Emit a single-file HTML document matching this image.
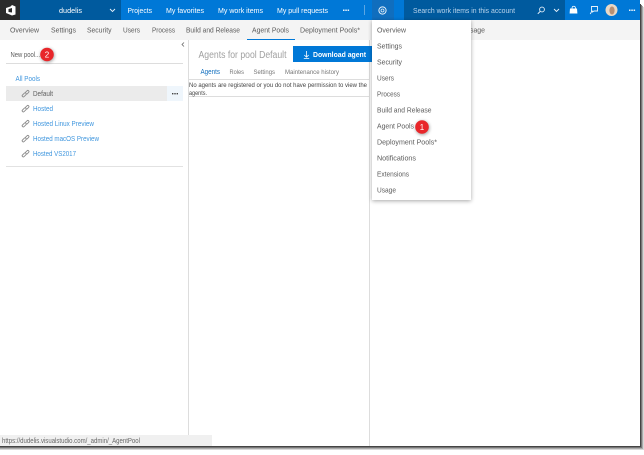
<!DOCTYPE html>
<html><head><meta charset="utf-8"><style>
html,body{margin:0;padding:0;background:#fff;width:644px;height:450px;overflow:hidden}
svg{display:block;position:absolute;left:-5px;top:-5px;filter:blur(.38px)}
text{font-family:"Liberation Sans",sans-serif;font-size:7.500px;fill:#5c5c5c;white-space:pre}
.w text{fill:#fff}
.b text{fill:#3f96de}
.g{fill:none;stroke:#8c8c8c;stroke-width:.9}
</style></head><body>
<svg width="654" height="460" viewBox="-5 -5 654 460" xmlns="http://www.w3.org/2000/svg">
<defs>
<filter id="s" x="-20%" y="-20%" width="140%" height="140%"><feGaussianBlur stdDeviation="2"/></filter>
<filter id="r" x="-50%" y="-50%" width="200%" height="200%"><feGaussianBlur stdDeviation="1.500"/></filter>
<g id="l"><path class="g" d="M-3 1.500l1.800-1.800a1.100 1.100 0 0 1 1.600 1.600l-1.800 1.800a1.100 1.100 0 0 1-1.600-1.600zM-.4 -.8l1.900-1.900a1.100 1.100 0 0 1 1.600 1.600l-1.900 1.900"/></g>
</defs>
<rect x="-5" y="-5" width="654" height="460" fill="#fff"/>
<!-- top bar -->
<rect y="-5" width="640" height="25" fill="#0078d7"/>
<rect x="-5" y="-5" width="25" height="25" fill="#2b2b2b"/>
<rect x="20" y="-5" width="101" height="25" fill="#005a9e"/>
<rect x="404" y="-5" width="161" height="25" fill="#005a9e"/>
<rect x="372" y="-5" width="22" height="25" fill="#106ebe"/>
<path d="M6 8l4.500-1.500L12 5l3.500 1.500v8L12 15.500l-6-2.500z" fill="#fff"/>
<path d="M8.500 9l3.500-1v4.500l-3.500-.5z" fill="#2b2b2b"/>
<g class="w">
<text x="59" y="13" textLength="23" lengthAdjust="spacingAndGlyphs">dudelis</text>
<text x="127.500" y="13" textLength="24.500" lengthAdjust="spacingAndGlyphs">Projects</text>
<text x="166" y="13" textLength="38" lengthAdjust="spacingAndGlyphs">My favorites</text>
<text x="218" y="13" textLength="45" lengthAdjust="spacingAndGlyphs">My work items</text>
<text x="277" y="13" textLength="51" lengthAdjust="spacingAndGlyphs">My pull requests</text>
<text x="413" y="13" textLength="102" lengthAdjust="spacingAndGlyphs" style="fill:#b9d4ec">Search work items in this account</text>
</g>
<path d="M110 9l2.500 2.500L115 9" fill="none" stroke="#e8f2fb" stroke-width=".9"/>
<g fill="#e8f2fb"><rect x="343" y="9.500" width="1.500" height="1.500"/><rect x="345.300" y="9.500" width="1.500" height="1.500"/><rect x="347.600" y="9.500" width="1.500" height="1.500"/>
<rect x="629" y="9.500" width="1.500" height="1.500"/><rect x="631.300" y="9.500" width="1.500" height="1.500"/><rect x="633.600" y="9.500" width="1.500" height="1.500"/></g>
<rect x="364" y="5" width="1" height="10" fill="#5ba6e3"/>
<circle cx="382.500" cy="10.500" r="3.600" fill="none" stroke="#e8f2fb" stroke-width="1"/><circle cx="382.500" cy="10.500" r="1.500" fill="none" stroke="#e8f2fb" stroke-width=".8"/>
<circle cx="542" cy="9.500" r="2.400" fill="none" stroke="#e8f2fb" stroke-width=".9"/><path d="M540.300 11.300L537.800 13.800" stroke="#e8f2fb" stroke-width="1"/>
<path d="M554 9l2.500 2.500L559 9" fill="none" stroke="#e8f2fb" stroke-width=".9"/>
<path d="M570 8.500h7l.4 5h-7.800z" fill="#fff"/><path d="M572 8.500c0-3 3.500-3 3.500 0" fill="none" stroke="#fff" stroke-width=".8"/>
<path d="M591.500 6.500h6v4.500h-3.500l-1.500 1-.2-1h-.8z" fill="none" stroke="#e8f2fb" stroke-width=".9"/><path d="M592 11l-1.800 3" stroke="#e8f2fb" stroke-width=".9"/>
<circle cx="611.500" cy="10" r="6" fill="#e9d8c6"/><ellipse cx="612" cy="10.500" rx="2.600" ry="4" fill="#b78f74"/>
<!-- sub nav -->
<rect x="-5" y="20" width="645" height="20" fill="#f4f4f4"/>
<text x="10" y="32.500" textLength="29" lengthAdjust="spacingAndGlyphs">Overview</text>
<text x="51" y="32.500" textLength="25" lengthAdjust="spacingAndGlyphs">Settings</text>
<text x="87" y="32.500" textLength="24.500" lengthAdjust="spacingAndGlyphs">Security</text>
<text x="123" y="32.500" textLength="17" lengthAdjust="spacingAndGlyphs">Users</text>
<text x="152" y="32.500" textLength="23" lengthAdjust="spacingAndGlyphs">Process</text>
<text x="186" y="32.500" textLength="54" lengthAdjust="spacingAndGlyphs">Build and Release</text>
<text x="252" y="32.500" textLength="37" lengthAdjust="spacingAndGlyphs">Agent Pools</text>
<text x="300" y="32.500" textLength="60" lengthAdjust="spacingAndGlyphs">Deployment Pools*</text>
<text x="465" y="32.500" textLength="20" lengthAdjust="spacingAndGlyphs">Usage</text>
<rect x="247" y="39" width="48" height="1" fill="#0078d7"/>
<!-- left panel -->
<text x="10.500" y="57" textLength="29.500" lengthAdjust="spacingAndGlyphs">New pool...</text>
<path d="M184 42.500l-2 2 2 2" fill="none" stroke="#666" stroke-width=".8"/>
<rect x="6" y="63" width="177" height="1" fill="#ddd"/>
<g class="b"><text x="15.500" y="81" textLength="24.500" lengthAdjust="spacingAndGlyphs">All Pools</text></g>
<rect x="6" y="86" width="161" height="15" fill="#ebebeb"/>
<rect x="167" y="86" width="16" height="15" fill="#eff6fc"/>
<g fill="#444"><rect x="172" y="93" width="1.400" height="1.400"/><rect x="174.300" y="93" width="1.400" height="1.400"/><rect x="176.600" y="93" width="1.400" height="1.400"/></g>
<use href="#l" x="25.500" y="93.500"/><use href="#l" x="25.500" y="108.500"/><use href="#l" x="25.500" y="123.500"/><use href="#l" x="25.500" y="138.500"/><use href="#l" x="25.500" y="153.500"/>
<text x="33" y="96" textLength="20" lengthAdjust="spacingAndGlyphs">Default</text>
<g class="b">
<text x="33" y="111" textLength="20" lengthAdjust="spacingAndGlyphs">Hosted</text>
<text x="33" y="126" textLength="61" lengthAdjust="spacingAndGlyphs">Hosted Linux Preview</text>
<text x="33" y="141" textLength="66" lengthAdjust="spacingAndGlyphs">Hosted macOS Preview</text>
<text x="33" y="156" textLength="43" lengthAdjust="spacingAndGlyphs">Hosted VS2017</text>
</g>
<rect x="6" y="166" width="177" height="1" fill="#e2e2e2"/>
<rect x="188" y="40" width="1" height="406" fill="#ddd"/>
<rect x="369" y="40" width="1" height="406" fill="#ddd"/>
<!-- center -->
<text x="198.500" y="58" textLength="88" lengthAdjust="spacingAndGlyphs" style="font-size:10px;fill:#a0a0a0">Agents for pool Default</text>
<rect x="293" y="46" width="79" height="16" fill="#0078d7"/>
<path d="M306.500 51v6M304.300 55l2.200 2.200 2.200-2.200M303.800 58.500h5.400" fill="none" stroke="#fff" stroke-width=".8"/>
<text x="313" y="57" textLength="53" lengthAdjust="spacingAndGlyphs" style="font-weight:bold;fill:#fff">Download agent</text>
<text x="200.500" y="74" textLength="19.500" lengthAdjust="spacingAndGlyphs" style="fill:#106ebe">Agents</text>
<text x="229.500" y="74" textLength="14.500" lengthAdjust="spacingAndGlyphs" style="font-size:6.500px;fill:#777">Roles</text>
<text x="253.500" y="74" textLength="21.500" lengthAdjust="spacingAndGlyphs" style="font-size:6.500px;fill:#777">Settings</text>
<text x="285" y="74" textLength="54" lengthAdjust="spacingAndGlyphs" style="font-size:6.500px;fill:#777">Maintenance history</text>
<rect x="189" y="79" width="180" height="1" fill="#ddd"/>
<rect x="189" y="96" width="180" height="1" fill="#ddd"/>
<text x="189" y="87" textLength="178" lengthAdjust="spacingAndGlyphs" style="fill:#444;font-size:6.800px">No agents are registered or you do not have permission to view the</text>
<text x="189" y="95" textLength="18" lengthAdjust="spacingAndGlyphs" style="fill:#444;font-size:6.800px">agents.</text>
<!-- menu -->
<rect x="372" y="21" width="99" height="180" fill="#000" opacity=".35" filter="url(#s)"/>
<rect x="372" y="20" width="99" height="180" fill="#fff"/>
<g>
<text x="377" y="32.500" textLength="29" lengthAdjust="spacingAndGlyphs">Overview</text>
<text x="377" y="48.500" textLength="25" lengthAdjust="spacingAndGlyphs">Settings</text>
<text x="377" y="64.500" textLength="25" lengthAdjust="spacingAndGlyphs">Security</text>
<text x="377" y="80.500" textLength="17" lengthAdjust="spacingAndGlyphs">Users</text>
<text x="377" y="96.500" textLength="23" lengthAdjust="spacingAndGlyphs">Process</text>
<text x="377" y="112.500" textLength="54.500" lengthAdjust="spacingAndGlyphs">Build and Release</text>
<text x="377" y="128.500" textLength="37" lengthAdjust="spacingAndGlyphs">Agent Pools</text>
<text x="377" y="144.500" textLength="60" lengthAdjust="spacingAndGlyphs">Deployment Pools*</text>
<text x="377" y="160.500" textLength="39" lengthAdjust="spacingAndGlyphs">Notifications</text>
<text x="377" y="176.500" textLength="32" lengthAdjust="spacingAndGlyphs">Extensions</text>
<text x="377" y="192.500" textLength="19" lengthAdjust="spacingAndGlyphs">Usage</text>
</g>
<!-- callouts -->
<circle cx="47.500" cy="55.500" r="7" fill="#000" opacity=".35" filter="url(#r)"/>
<circle cx="47" cy="54.500" r="6.800" fill="#e8262a"/>
<text x="47" y="57.500" text-anchor="middle" style="font-size:8px;fill:#fff">2</text>
<circle cx="422.500" cy="128" r="7" fill="#000" opacity=".35" filter="url(#r)"/>
<circle cx="422" cy="127" r="6.800" fill="#e8262a"/>
<text x="422" y="130" text-anchor="middle" style="font-size:8px;fill:#fff">1</text>
<!-- status bar -->
<rect x="-5" y="435" width="217" height="11" fill="#f0f0f0"/>
<text x="2" y="443" textLength="138" lengthAdjust="spacingAndGlyphs" style="fill:#666">https://dudelis.visualstudio.com/_admin/_AgentPool</text>
<!-- window shadow -->
<rect x="-5" y="446" width="654" height="9" fill="#fff"/>
<rect x="640" y="-5" width="9" height="460" fill="#fff"/>
<rect x="-5" y="446" width="646" height="1" fill="#444"/>
<rect x="-5" y="447" width="647" height="1" fill="#777"/>
<rect x="-5" y="448" width="648" height="1" fill="#aaa"/>
<rect x="-5" y="449" width="649" height="1" fill="#d8d8d8"/>
<rect x="640" y="4" width="1" height="443" fill="#444"/>
<rect x="641" y="5" width="1" height="443" fill="#777"/>
<rect x="642" y="6" width="1" height="443" fill="#aaa"/>
<rect x="643" y="7" width="1" height="443" fill="#d8d8d8"/>
</svg>
</body></html>
